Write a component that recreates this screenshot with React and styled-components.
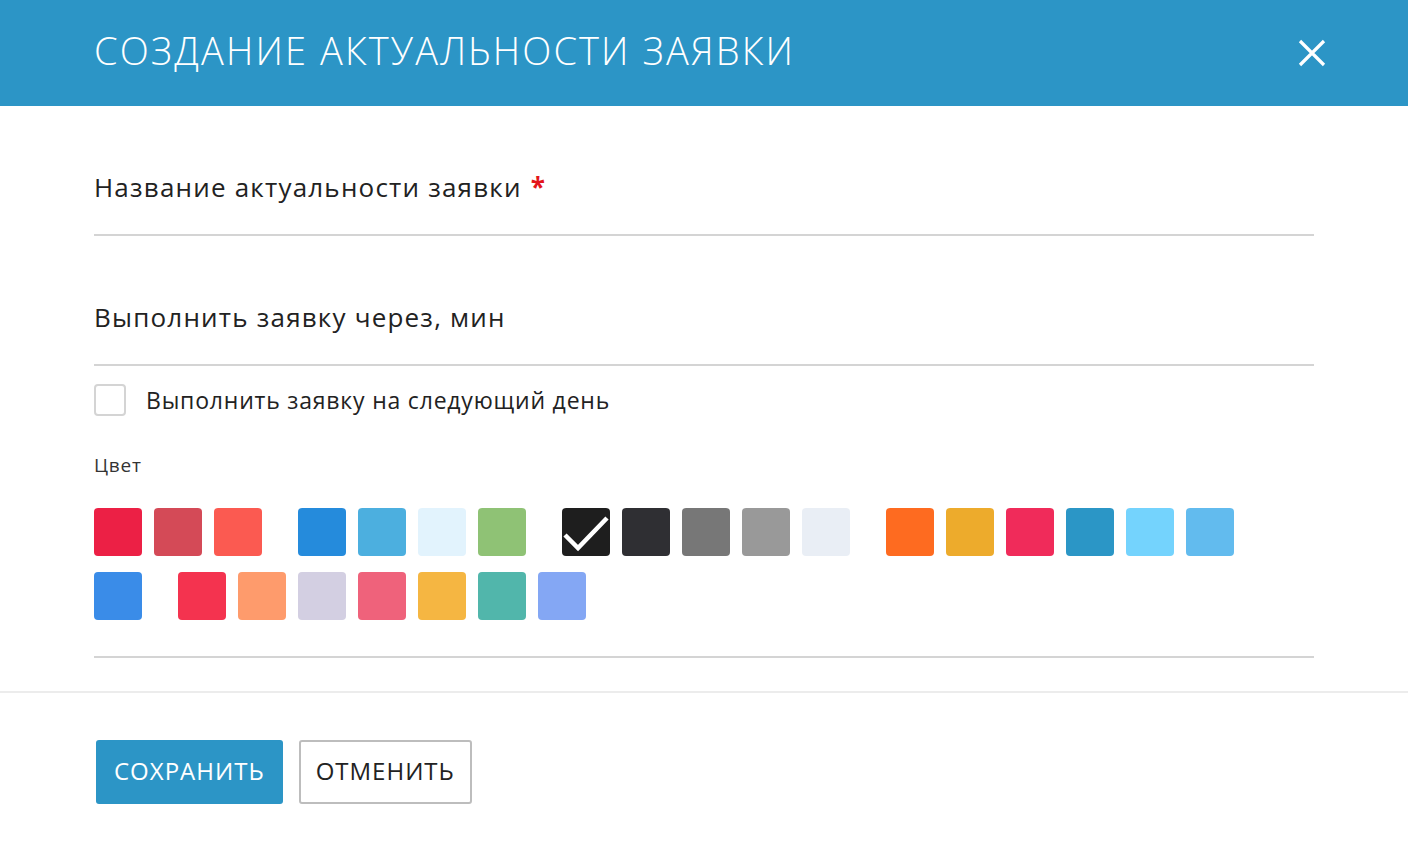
import React, { useState } from "react";
import styled, { createGlobalStyle } from "styled-components";

const GlobalStyle = createGlobalStyle`
  body {
    margin: 0;
    background: #fff;
    font-family: "Open Sans", "Liberation Sans", sans-serif;
    color: #222;
  }
`;

const Modal = styled.div`
  width: 1408px;
  min-height: 852px;
  background: #fff;
`;

const Header = styled.div`
  height: 106px;
  background: #2c95c6;
  display: flex;
  align-items: center;
  justify-content: space-between;
  padding: 0 80px 6px 94px;
  box-sizing: border-box;
`;

const Title = styled.h1`
  margin: 0;
  font-weight: 300;
  font-size: 38px;
  color: #fff;
  text-transform: uppercase;
  letter-spacing: 2.1px;
`;

const Close = styled.button`
  width: 32px;
  height: 32px;
  margin-top: 6px;
  border: none;
  background: none;
  padding: 0;
  cursor: pointer;
  display: flex;
  align-items: center;
  justify-content: center;
`;

const Body = styled.div`
  padding: 0 94px 33px;
  border-bottom: 2px solid #ececec;
`;

const Field = styled.div`
  height: 130px;
  display: flex;
  align-items: flex-end;
  border-bottom: 2px solid #d4d4d4;
  box-sizing: border-box;
  padding-bottom: 31px;
`;

const Label = styled.label`
  font-size: 26px;
  line-height: 32px;
  letter-spacing: 1.2px;
  color: #222;
`;

const Star = styled.span`
  color: #e3151a;
  margin-left: 9px;
  font-weight: 700;
`;

const CheckRow = styled.label`
  margin-top: 18px;
  display: flex;
  align-items: center;
  gap: 20px;
  font-size: 23px;
  letter-spacing: 0.8px;
  color: #222;
  cursor: pointer;
`;

const Box = styled.span`
  width: 32px;
  height: 32px;
  box-sizing: border-box;
  border: 2px solid #d4d4d4;
  border-radius: 4px;
  background: ${(p) => (p.$on ? "#2c95c6" : "#fff")};
`;

const SmallLabel = styled.div`
  margin-top: 38px;
  font-size: 19px;
  line-height: 22px;
  letter-spacing: 0.8px;
  color: #333;
`;

const Swatches = styled.div`
  margin-top: 32px;
  width: 1220px;
  display: flex;
  flex-wrap: wrap;
  column-gap: 12px;
  row-gap: 16px;
  padding-bottom: 36px;
  border-bottom: 2px solid #d4d4d4;
`;

const Swatch = styled.button`
  width: 48px;
  height: 48px;
  border: none;
  padding: 0;
  border-radius: 4px;
  background: ${(p) => p.$color};
  display: flex;
  align-items: center;
  justify-content: center;
  cursor: pointer;
`;

const Spacer = styled.span`
  width: 12px;
  height: 48px;
`;

const Footer = styled.div`
  padding: 47px 96px;
  display: flex;
  gap: 16px;
`;

const Button = styled.button`
  height: 64px;
  padding: 0 ${(p) => (p.$primary ? "18px" : "15px")} 3px;
  border-radius: 3px;
  font-family: "Open Sans", "Liberation Sans", sans-serif;
  font-size: 24px;
  letter-spacing: 1px;
  text-transform: uppercase;
  cursor: pointer;
  background: ${(p) => (p.$primary ? "#2c95c6" : "#fff")};
  color: ${(p) => (p.$primary ? "#fff" : "#222")};
  border: ${(p) => (p.$primary ? "none" : "2px solid #bdbdbd")};
`;

const colors = [
  "#ec2045", "#d44a57", "#fb5a51", null,
  "#258bdc", "#4cafdf", "#e2f3fd", "#8fc275", null,
  "#1e1e1e", "#2f2f33", "#777777", "#999999", "#e9eef5", null,
  "#fe6b20", "#edab2c", "#f02b5a", "#2b96c6", "#74d3fd", "#62bbee", null,
  "#3a8ce8", null,
  "#f4334f", "#fe9b6c", "#d3cfe2", "#ef627b", "#f5b642", "#51b6ab", "#84a7f4",
];

export default function App() {
  const [picked, setPicked] = useState("#1e1e1e");
  const [nextDay, setNextDay] = useState(false);

  return (
    <>
      <GlobalStyle />
      <Modal>
        <Header>
          <Title>Создание актуальности заявки</Title>
          <Close aria-label="close">
            <svg width="28" height="28" viewBox="0 0 28 28">
              <path d="M2 2L26 26M26 2L2 26" stroke="#fff" strokeWidth="3.2" />
            </svg>
          </Close>
        </Header>
        <Body>
          <Field>
            <Label>
              Название актуальности заявки<Star>*</Star>
            </Label>
          </Field>
          <Field>
            <Label>Выполнить заявку через, мин</Label>
          </Field>
          <CheckRow onClick={() => setNextDay(!nextDay)}>
            <Box $on={nextDay} />
            Выполнить заявку на следующий день
          </CheckRow>
          <SmallLabel>Цвет</SmallLabel>
          <Swatches>
            {colors.map((c, i) =>
              c ? (
                <Swatch key={i} $color={c} onClick={() => setPicked(c)}>
                  {picked === c && (
                    <svg width="48" height="48" viewBox="0 0 48 48">
                      <path d="M3 27L16 40L45 10" fill="none" stroke="#fff" strokeWidth="4.5" />
                    </svg>
                  )}
                </Swatch>
              ) : (
                <Spacer key={i} />
              )
            )}
          </Swatches>
        </Body>
        <Footer>
          <Button $primary>Сохранить</Button>
          <Button>Отменить</Button>
        </Footer>
      </Modal>
    </>
  );
}
